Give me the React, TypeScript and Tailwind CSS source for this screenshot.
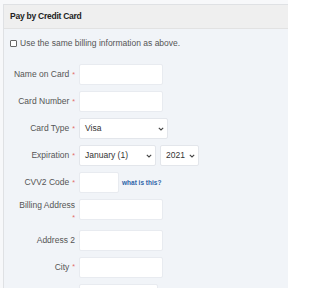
import React from 'react';

const font = { fontFamily: '"Liberation Sans", Arial, sans-serif' };

const Req = () => <span className="ml-[3px] text-[7px] text-[#e26a6a] align-middle">*</span>;

const Chevron = () => (
  <svg className="absolute right-[3px] top-1/2 -translate-y-1/2" width="6" height="4" viewBox="0 0 6 4" fill="none">
    <path d="M0.8 0.8l2.2 2.2 2.2-2.2" stroke="#444" strokeWidth="1.1" />
  </svg>
);

const Select = ({ value, width }: { value: string; width: string }) => (
  <div className={`relative h-[21px] ${width} bg-white border border-[#e3e6eb] rounded-[2px] flex items-center pl-[5px] text-[8.5px] text-[#333]`}>
    {value}
    <Chevron />
  </div>
);

const Input = ({ width = 'w-[84px]' }: { width?: string }) => (
  <div className={`h-[21px] ${width} bg-white border border-[#e8ebf0] rounded-[2px]`} />
);

const Row = ({ label, req = true, children }: { label: string; req?: boolean; children: React.ReactNode }) => (
  <div className="flex items-center min-h-[21px]">
    <div className="w-[75px] pr-[4px] text-right text-[8.5px] text-[#555]">
      {label}
      {req && <Req />}
    </div>
    {children}
  </div>
);

export default function App() {
  return (
    <div className="w-[288px] h-[288px] overflow-hidden bg-[#f7f8fa] pt-[4px] pl-[3px]" style={font}>
      <div className="h-[300px] border-l border-t border-[#dfe1e4] bg-[#f1f4f8]">
        <div className="h-[24px] bg-[#efefef] border-b border-[#e2e2e2] flex items-center pl-[6px] text-[8.5px] tracking-[-0.25px] font-bold text-[#222]">
          Pay by Credit Card
        </div>
        <div className="flex items-center h-[12px] mt-[8px] pl-[6px] text-[8.5px] text-[#555]">
          <div className="w-[7px] h-[7px] border border-[#666] rounded-[1px] bg-white mr-[3px]" />
          Use the same billing information as above.
        </div>
        <div className="mt-[15px] flex flex-col gap-[6px]">
          <Row label="Name on Card"><Input /></Row>
          <Row label="Card Number"><Input /></Row>
          <Row label="Card Type"><Select value="Visa" width="w-[89px]" /></Row>
          <Row label="Expiration">
            <div className="flex gap-[4px]">
              <Select value="January (1)" width="w-[77px]" />
              <Select value="2021" width="w-[39px]" />
            </div>
          </Row>
          <Row label="CVV2 Code">
            <Input width="w-[40px]" />
            <a className="ml-[3px] text-[6.5px] font-bold text-[#2c64a8]">what is this?</a>
          </Row>
          <div className="flex items-start">
            <div className="w-[75px] pr-[4px] text-right text-[8.5px] leading-[12px] text-[#555]">
              Billing Address
              <br />
              <Req />
            </div>
            <Input />
          </div>
          <Row label="Address 2" req={false}><Input /></Row>
          <Row label="City"><Input /></Row>
          <Row label="" req={false}><Input width="w-[79px]" /></Row>
        </div>
      </div>
    </div>
  );
}
